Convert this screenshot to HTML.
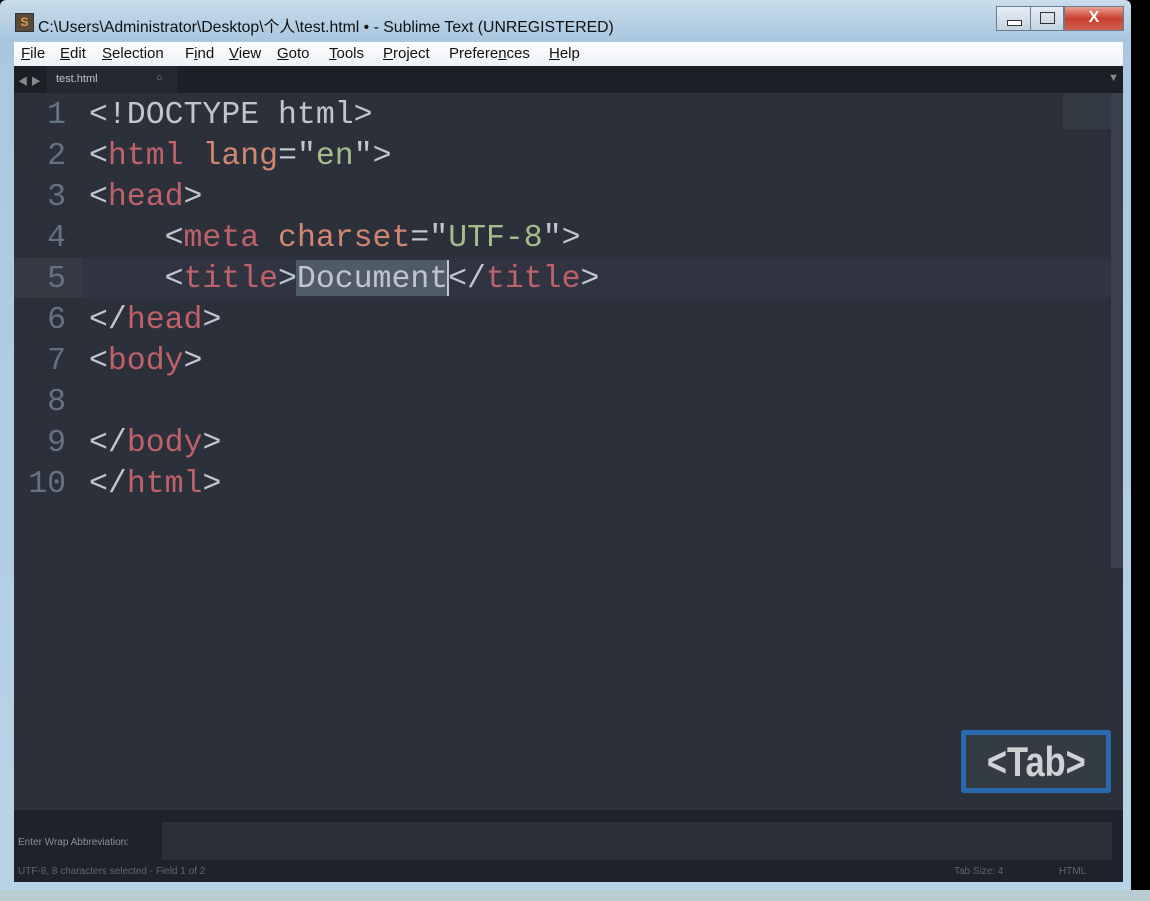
<!DOCTYPE html>
<html><head><meta charset="utf-8"><style>
body{margin:0;width:1150px;height:901px;background:#000;position:relative;overflow:hidden;font-family:"Liberation Sans","Noto Sans CJK SC",sans-serif}
.frame{position:absolute;left:0;top:0;width:1131px;height:890px;background:linear-gradient(#c9dcea,#a9c7df 40px,#b9d3e6);border-radius:6px 6px 0 0}
.below{position:absolute;left:0;top:890px;width:1150px;height:11px;background:#b8ccd2}
.title{position:absolute;left:38px;top:14px;font-size:15.8px;color:#111}
.icon{position:absolute;left:15px;top:13px;width:17px;height:17px;background:#5a4a3a;border:1px solid #333;color:#e8a040;font-size:12px;font-weight:bold;text-align:center;line-height:17px}
.btn{position:absolute;top:6px;height:23px;border:1px solid #6b7d8f;background:linear-gradient(#e6eef5,#c4d3e0)}
.menu{position:absolute;left:14px;top:42px;width:1109px;height:24px;background:linear-gradient(#fdfdfe,#eef2f6);font-size:15px;color:#111}
.menu span{position:absolute;top:3px}
.tabs{position:absolute;left:14px;top:66px;width:1109px;height:27px;background:#1c1f26}
.tab{position:absolute;left:33px;top:0;width:130px;height:27px;background:#242832;color:#c0c5ce;font-size:11px}
.ed{position:absolute;left:14px;top:93px;width:1109px;height:717px;background:#2b303b}
.code{position:absolute;left:0;top:0;font-family:"Liberation Mono",monospace;font-size:31.5px;color:#c0c5ce}
.ln{position:absolute;height:41px;line-height:41px;white-space:pre}
.num{position:absolute;left:0;width:52px;text-align:right;color:#65737e}
.t{color:#bf616a}.a{color:#d08770}.s{color:#a3be8c}
.panel{position:absolute;left:14px;top:810px;width:1109px;height:72px;background:#1f222a}
</style></head><body>
<div class="frame"></div><div class="below"></div>
<div class="icon">S</div>
<div class="title">C:\Users\Administrator\Desktop\个人\test.html • - Sublime Text (UNREGISTERED)</div>
<div class="btn" style="left:996px;width:33px"><div style="position:absolute;left:10px;top:13px;width:13px;height:4px;border:1px solid #333;background:#fff"></div></div>
<div class="btn" style="left:1030px;width:32px"><div style="position:absolute;left:9px;top:5px;width:13px;height:10px;border:1px solid #333"></div></div>
<div class="btn" style="left:1064px;width:58px;background:linear-gradient(#e9a090,#c8402e 50%,#d06050);color:#fff;text-align:center;font-weight:bold;font-size:16px;line-height:22px">X</div>
<div class="menu">
<span style="left:7px"><u>F</u>ile</span><span style="left:46px"><u>E</u>dit</span><span style="left:88px"><u>S</u>election</span><span style="left:171px">F<u>i</u>nd</span><span style="left:215px"><u>V</u>iew</span><span style="left:263px"><u>G</u>oto</span><span style="left:315px"><u>T</u>ools</span><span style="left:369px"><u>P</u>roject</span><span style="left:435px">Prefere<u>n</u>ces</span><span style="left:535px"><u>H</u>elp</span>
</div>
<div class="tabs">
<div style="position:absolute;left:4px;top:7px;color:#888;font-size:10px">◀ ▶</div>
<div class="tab"><span style="position:absolute;left:9px;top:7px">test.html</span><span style="position:absolute;left:109px;top:6px;color:#888">○</span></div>
<div style="position:absolute;right:4px;top:6px;color:#888;font-size:11px">▼</div>
</div>
<div class="ed">
<div style="position:absolute;left:0;top:165px;width:68px;height:40px;background:#353a45"></div>
<div style="position:absolute;left:68px;top:165px;width:1030px;height:40px;background:#2f3440"></div>
<div style="position:absolute;left:282px;top:167px;width:151px;height:36px;background:#4f5b66"></div>
<div style="position:absolute;left:433px;top:167px;width:2px;height:36px;background:#c0c5ce"></div>
<div style="position:absolute;left:1049px;top:0;width:60px;height:36px;background:#343a44"></div>
<div style="position:absolute;left:1097px;top:0;width:12px;height:475px;background:#3a404b"></div>
<div class="code">
<div class="ln" style="top:2px"><span class="num">1</span><span style="position:absolute;left:75px">&lt;!DOCTYPE html&gt;</span></div>
<div class="ln" style="top:43px"><span class="num">2</span><span style="position:absolute;left:75px">&lt;<span class="t">html</span> <span class="a">lang</span>="<span class="s">en</span>"&gt;</span></div>
<div class="ln" style="top:84px"><span class="num">3</span><span style="position:absolute;left:75px">&lt;<span class="t">head</span>&gt;</span></div>
<div class="ln" style="top:125px"><span class="num">4</span><span style="position:absolute;left:75px">    &lt;<span class="t">meta</span> <span class="a">charset</span>="<span class="s">UTF-8</span>"&gt;</span></div>
<div class="ln" style="top:166px"><span class="num">5</span><span style="position:absolute;left:75px">    &lt;<span class="t">title</span>&gt;Document&lt;/<span class="t">title</span>&gt;</span></div>
<div class="ln" style="top:207px"><span class="num">6</span><span style="position:absolute;left:75px">&lt;/<span class="t">head</span>&gt;</span></div>
<div class="ln" style="top:248px"><span class="num">7</span><span style="position:absolute;left:75px">&lt;<span class="t">body</span>&gt;</span></div>
<div class="ln" style="top:289px"><span class="num">8</span></div>
<div class="ln" style="top:330px"><span class="num">9</span><span style="position:absolute;left:75px">&lt;/<span class="t">body</span>&gt;</span></div>
<div class="ln" style="top:371px"><span class="num">10</span><span style="position:absolute;left:75px">&lt;/<span class="t">html</span>&gt;</span></div>
</div>
<div style="position:absolute;left:947px;top:637px;width:140px;height:53px;border:5px solid #2a68b0;border-radius:3px;background:#353b45;color:#cfd1d4;font:bold 42px 'Liberation Sans',sans-serif;text-align:center;line-height:53px;overflow:hidden"><span style="display:inline-block;transform:scaleX(0.82)">&lt;Tab&gt;</span></div>
</div>
<div class="panel">
<div style="position:absolute;left:4px;top:27px;font-size:10px;color:#8a8f98">Enter Wrap Abbreviation:</div>
<div style="position:absolute;left:148px;top:12px;width:950px;height:38px;background:#2b2f38"></div>
<div style="position:absolute;left:4px;top:56px;font-size:10px;color:#5f6570">UTF-8, 8 characters selected - Field 1 of 2</div>
<div style="position:absolute;left:940px;top:56px;font-size:10px;color:#5f6570">Tab Size: 4</div>
<div style="position:absolute;left:1045px;top:56px;font-size:10px;color:#5f6570">HTML</div>
</div>
</body></html>
